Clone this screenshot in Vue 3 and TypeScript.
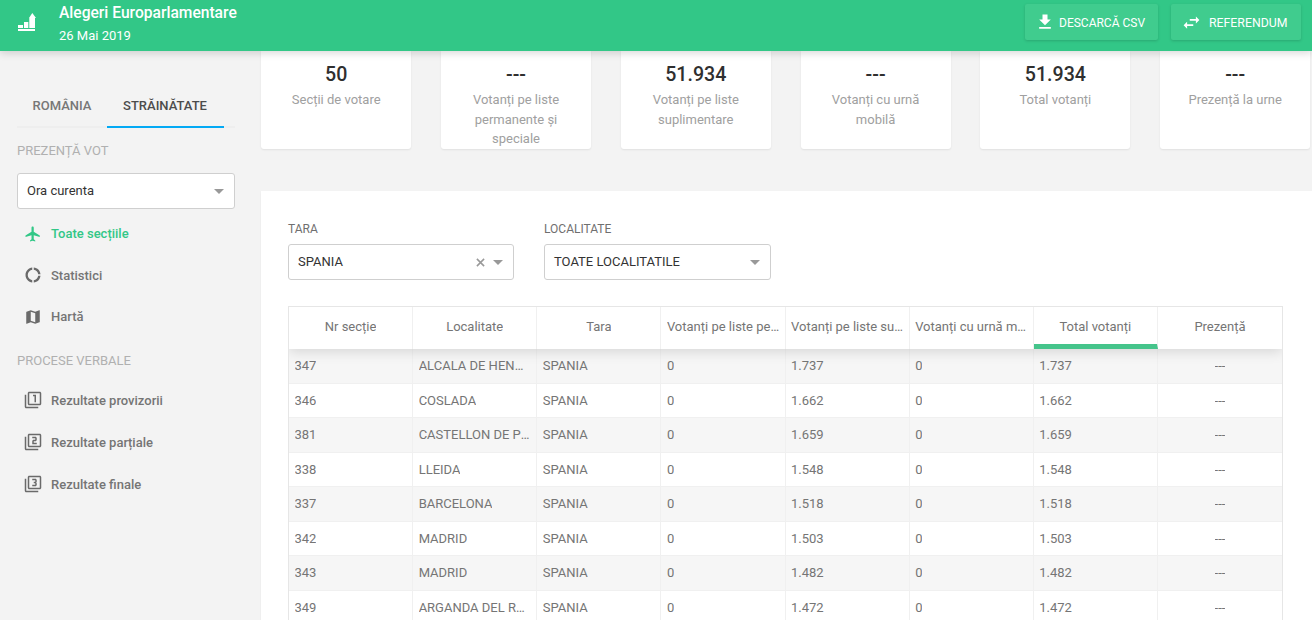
<script setup lang="ts">
interface Stat { value: string; label: string }
const stats: Stat[] = [
  { value: '50', label: 'Secții de votare' },
  { value: '---', label: 'Votanți pe liste permanente și speciale' },
  { value: '51.934', label: 'Votanți pe liste suplimentare' },
  { value: '---', label: 'Votanți cu urnă mobilă' },
  { value: '51.934', label: 'Total votanți' },
  { value: '---', label: 'Prezență la urne' },
]
const headers = ['Nr secție', 'Localitate', 'Tara', 'Votanți pe liste permanente', 'Votanți pe liste suplimentare', 'Votanți cu urnă mobilă', 'Total votanți', 'Prezență']
const rows = [
  ['347', 'ALCALA DE HENARES', '1.737'],
  ['346', 'COSLADA', '1.662'],
  ['381', 'CASTELLON DE PLANA', '1.659'],
  ['338', 'LLEIDA', '1.548'],
  ['337', 'BARCELONA', '1.518'],
  ['342', 'MADRID', '1.503'],
  ['343', 'MADRID', '1.482'],
  ['349', 'ARGANDA DEL REY', '1.472'],
]
const navTop = [
  { label: 'Toate secțiile', active: true, d: 'M21 16v-2l-8-5V3.5c0-.83-.67-1.5-1.5-1.5S10 2.67 10 3.5V9l-8 5v2l8-2.5V19l-2 1.5V22l3.5-1 3.5 1v-1.5L13 19v-5.5l8 2.5z' },
  { label: 'Statistici', active: false, d: 'M11 5.08V2c-5 .5-9 4.81-9 10s4 9.5 9 10v-3.08c-3-.48-6-3.19-6-6.92s3-6.44 6-6.92zM18.97 11H22c-.47-5-4-8.53-9-9v3.08C16 5.51 18.54 8 18.97 11zM13 18.92V22c5-.47 8.53-4 9-9h-3.03c-.43 3-2.97 5.49-5.97 5.92z' },
  { label: 'Hartă', active: false, d: 'M20.5 3l-.16.03L15 5.1 9 3 3.36 4.9c-.21.07-.36.25-.36.48V20.5c0 .28.22.5.5.5l.16-.03L9 18.9l6 2.1 5.64-1.9c.21-.07.36-.25.36-.48V3.5c0-.28-.22-.5-.5-.5zM15 19l-6-2.11V5l6 2.11V19z' },
]
const navBottom = [
  { label: 'Rezultate provizorii', d: 'M3 5H1v16c0 1.1.9 2 2 2h16v-2H3V5zm11 10h2V5h-4v2h2v8zm7-14H7c-1.1 0-2 .9-2 2v14c0 1.1.9 2 2 2h14c1.1 0 2-.9 2-2V3c0-1.1-.9-2-2-2zm0 16H7V3h14v14z' },
  { label: 'Rezultate parțiale', d: 'M3 5H1v16c0 1.1.9 2 2 2h16v-2H3V5zm18-4H7c-1.1 0-2 .9-2 2v14c0 1.1.9 2 2 2h14c1.1 0 2-.9 2-2V3c0-1.1-.9-2-2-2zm0 16H7V3h14v14zm-4-4h-4v-2h2c1.1 0 2-.89 2-2V7c0-1.11-.9-2-2-2h-4v2h4v2h-2c-1.1 0-2 .89-2 2v4h6v-2z' },
  { label: 'Rezultate finale', d: 'M21 1H7c-1.1 0-2 .9-2 2v14c0 1.1.9 2 2 2h14c1.1 0 2-.9 2-2V3c0-1.1-.9-2-2-2zm0 16H7V3h14v14zM3 5H1v16c0 1.1.9 2 2 2h16v-2H3V5zm14 8v-1.5c0-.83-.67-1.5-1.5-1.5.83 0 1.5-.67 1.5-1.5V7c0-1.11-.9-2-2-2h-4v2h4v2h-2v2h2v2h-4v2h4c1.1 0 2-.89 2-2z' },
]
</script>

<template>
  <div class="page">
    <header class="topbar">
      <svg class="logo" viewBox="0 0 20 20" width="20" height="20">
        <path fill="#fff" d="M1 12h5v3H1zM7 9h4.300v6H7zM12.300 5H12L15.300 0 19 5h-1v10h-5.700zM1 16h17v2H1z" />
      </svg>
      <div class="brand">
        <div class="brand-title">Alegeri Europarlamentare</div>
        <div class="brand-sub">26 Mai 2019</div>
      </div>
      <div class="top-actions">
        <button class="top-btn btn-csv">
          <svg viewBox="0 0 24 24" width="20" height="20"><path fill="#fff" d="M19 9h-4V3H9v6H5l7 7 7-7zM5 18v2h14v-2H5z" /></svg>
          <span>DESCARCĂ CSV</span>
        </button>
        <button class="top-btn btn-ref">
          <svg viewBox="0 0 24 24" width="21" height="21"><path fill="#fff" d="M6.990 11L3 15l3.990 4v-3H14v-2H6.990v-3zM21 9l-3.990-4v3H10v2h7.010v3L21 9z" /></svg>
          <span>REFERENDUM</span>
        </button>
      </div>
    </header>

    <div class="body">
      <aside class="sidebar">
        <div class="tabs">
          <div class="tab">ROMÂNIA</div>
          <div class="tab tab-active">STRĂINĂTATE</div>
        </div>
        <div class="section-title first">PREZENȚĂ VOT</div>
        <div class="select side-select">
          <span>Ora curenta</span>
          <i class="caret"></i>
        </div>
        <nav class="nav">
          <div v-for="n in navTop" :key="n.label" class="nav-item" :class="{ active: n.active }">
            <svg viewBox="0 0 24 24" width="18" height="18"><path :d="n.d" /></svg>
            <span>{{ n.label }}</span>
          </div>
        </nav>
        <div class="section-title second">PROCESE VERBALE</div>
        <nav class="nav">
          <div v-for="n in navBottom" :key="n.label" class="nav-item">
            <svg viewBox="0 0 24 24" width="18" height="18"><path :d="n.d" /></svg>
            <span>{{ n.label }}</span>
          </div>
        </nav>
      </aside>

      <main class="main">
        <section class="stats">
          <div v-for="(s, i) in stats" :key="i" class="stat">
            <div class="stat-value">{{ s.value }}</div>
            <div class="stat-label">{{ s.label }}</div>
          </div>
        </section>

        <section class="panel">
          <div class="filters">
            <div class="filter f-tara">
              <label>TARA</label>
              <div class="select">
                <span>SPANIA</span>
                <svg class="clear" viewBox="0 0 10 10" width="9" height="9"><path d="M1 1l8 8M9 1l-8 8" stroke="#999" stroke-width="1.700" fill="none" /></svg>
                <i class="caret"></i>
              </div>
            </div>
            <div class="filter f-loc">
              <label>LOCALITATE</label>
              <div class="select">
                <span>TOATE LOCALITATILE</span>
                <i class="caret"></i>
              </div>
            </div>
          </div>

          <div class="table">
            <div class="thead">
              <div v-for="(h, i) in headers" :key="h" class="th" :class="{ left: i >= 3 && i <= 5, sorted: i === 6 }">
                <span class="ell">{{ h }}</span>
              </div>
            </div>
            <div class="tbody">
              <div v-for="(r, i) in rows" :key="i" class="tr" :class="{ odd: i % 2 === 0 }">
                <div class="td"><span class="ell">{{ r[0] }}</span></div>
                <div class="td"><span class="ell">{{ r[1] }}</span></div>
                <div class="td"><span class="ell">SPANIA</span></div>
                <div class="td"><span class="ell">0</span></div>
                <div class="td"><span class="ell">{{ r[2] }}</span></div>
                <div class="td"><span class="ell">0</span></div>
                <div class="td"><span class="ell">{{ r[2] }}</span></div>
                <div class="td center"><span class="ell">---</span></div>
              </div>
            </div>
          </div>
        </section>
      </main>
    </div>
  </div>
</template>

<style>
html, body { margin: 0; height: 100%; overflow: hidden; background: #f3f3f3; }
</style>

<style scoped>
.page {
  width: 1312px;
  height: 620px;
  overflow: hidden;
  display: flex;
  flex-direction: column;
  font-family: Roboto, "Liberation Sans", sans-serif;
  font-size: 13px;
  color: #6b6b6b;
  background: #f3f3f3;
}
.topbar {
  flex: 0 0 51px;
  height: 51px;
  background: #32c787;
  display: flex;
  align-items: flex-start;
  position: relative;
  z-index: 5;
  box-shadow: 0 2px 8px rgba(0, 0, 0, 0.16);
  color: #fff;
}
.logo { margin: 13px 0 0 17px; }
.brand { margin-left: 22px; }
.brand-title { font-size: 15.600px; font-weight: 500; line-height: 20px; margin-top: 3px; }
.brand-sub { font-size: 13px; line-height: 16px; margin-top: 5px; }
.top-actions { margin-left: auto; margin-right: 11px; display: flex; gap: 13px; padding-top: 4px; }
.top-btn {
  height: 36px;
  border: 0;
  border-radius: 2px;
  background: #40cc8e;
  color: #fff;
  font: 400 12px Roboto, sans-serif;
  display: flex;
  align-items: center;
  box-shadow: 0 1px 3px rgba(0, 0, 0, 0.16);
  padding: 0;
}
.top-btn span { padding-top: 1px; }
.btn-csv { width: 133px; padding-left: 10px; gap: 4px; }
.btn-ref { width: 130px; padding-left: 10px; gap: 7px; font-size: 12.300px; }

.body { display: flex; flex: 1; min-height: 0; }
.sidebar { flex: 0 0 261px; padding: 0 0 0 17px; box-sizing: border-box; }
.tabs {
  display: flex;
  width: 218px;
  height: 77px;
  border-bottom: 2px solid #eeeeee;
  box-sizing: border-box;
  padding: 0;
  align-items: flex-end;
}
.tab {
  font-size: 13px;
  font-weight: 500;
  height: 43px;
  line-height: 42px;
  box-sizing: border-box;
  margin-bottom: -2px;
  text-align: center;
  width: 90px;
  color: #777;
}
.tab-active { width: 117px; color: #4c4c4c; border-bottom: 2px solid #03a9f4; padding-right: 1px; }
.section-title { font-size: 13px; color: #b0b0b0; line-height: 16px; }
.section-title.first { margin-top: 15px; }
.section-title.second { margin-top: 15.500px; }
.select {
  position: relative;
  display: flex;
  align-items: center;
  height: 36px;
  box-sizing: border-box;
  background: #fff;
  border: 1px solid #cfcfcf;
  border-radius: 3px;
  padding: 0 10px 2px 9px;
  font-size: 13px;
  color: #333;
}
.select span { flex: 1; }
.caret {
  width: 0;
  height: 0;
  margin-top: 2px;
  border-left: 5.500px solid transparent;
  border-right: 5.500px solid transparent;
  border-top: 5px solid #999;
}
.side-select { width: 218px; margin-top: 14px; }
.nav { display: flex; flex-direction: column; }
.nav-item {
  display: flex;
  align-items: center;
  height: 41.500px;
  padding-left: 7px;
  gap: 9px;
  font-weight: 500;
  font-size: 13px;
  color: #757575;
}
.nav-item svg { fill: #6a6a6a; flex: none; }
.nav-item.active { color: #32c787; }
.nav-item.active svg { fill: #32c787; }
.side-select + .nav { margin-top: 4px; }
.section-title + .nav { margin-top: 10px; }
.second + .nav .nav-item { height: 42px; }

.main { flex: 1; min-width: 0; display: flex; flex-direction: column; }
.stats { display: flex; gap: 29.800px; height: 98px; padding-left: 0.200px; }
.stat {
  flex: 0 0 150px;
  height: 98px;
  background: #fff;
  border-radius: 0 0 3px 3px;
  box-shadow: 0 1px 2px rgba(0, 0, 0, 0.08);
  text-align: center;
  overflow: hidden;
  box-sizing: border-box;
  padding: 12px 14px 0;
}
.stat-value { font-size: 19.600px; font-weight: 500; line-height: 23px; color: #2f2f2f; }
.stat-label { font-size: 13px; line-height: 19.500px; color: #a0a0a0; margin-top: 4px; }

.panel {
  margin-top: 42px;
  background: #fff;
  flex: 1;
  padding: 30px 29px 0 27px;
  box-shadow: 0 1px 2px rgba(0, 0, 0, 0.05);
}
.filters { display: flex; gap: 30px; }
.filter label { display: block; font-size: 12px; line-height: 16px; color: #6f6f6f; margin-bottom: 7px; }
.f-tara { width: 226px; }
.f-loc { width: 227px; }
.clear { margin-right: 8px; margin-top: 2px; }

.table { margin-top: 26px; border: 1px solid #e6e6e6; border-bottom: 0; width: 995px; box-sizing: border-box; overflow: hidden; }
.thead, .tr { display: grid; grid-template-columns: repeat(8, 1fr); }
.thead { height: 42px; position: relative; z-index: 2; box-shadow: 0 3px 12px rgba(0, 0, 0, 0.13); background: #fff; }
.th {
  display: flex;
  align-items: center;
  justify-content: center;
  font-size: 13px;
  color: #757575;
  border-right: 1px solid #f0f0f0;
  padding: 0 4.500px 3px 4.500px;
  min-width: 0;
  box-sizing: border-box;
}
.th:last-child, .td:last-child { border-right: 0; }
.th.sorted { border-bottom: 5px solid #45c48b; padding-bottom: 0; padding-top: 2px; }
.th.left { justify-content: flex-start; padding: 0 3.500px 3px 5.500px; }
.ell { white-space: nowrap; overflow: hidden; text-overflow: ellipsis; min-width: 0; display: block; }
.tr { height: 34.500px; box-sizing: border-box; border-bottom: 1px solid #f0f0f0; background: #fff; }
.tr.odd { background: #f6f6f6; }
.td {
  display: flex;
  align-items: center;
  padding: 0 5.500px;
  font-size: 13px;
  color: #757575;
  border-right: 1px solid #f0f0f0;
  min-width: 0;
  box-sizing: border-box;
}
.td.center { justify-content: center; }
</style>
